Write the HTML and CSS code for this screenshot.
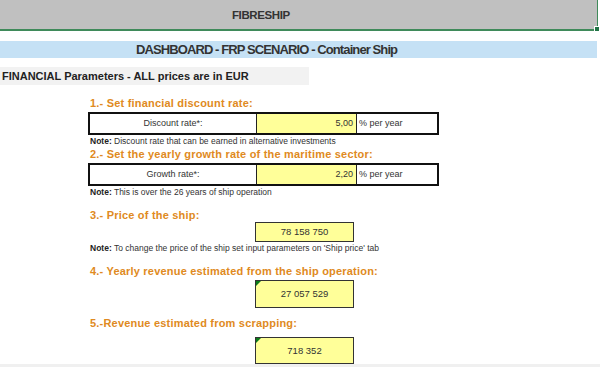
FILE: index.html
```html
<!DOCTYPE html>
<html>
<head>
  <title>FIBRESHIP - Dashboard</title>
  <link rel="stylesheet" href="styles.css">
</head>
<body>
  <div id="sheet">
    <div class="title-bar"><span>FIBRESHIP</span></div>
    <div class="dash-bar"><span>DASHBOARD - FRP SCENARIO - Container Ship</span></div>
    <div class="section-bar">FINANCIAL Parameters - ALL prices are in EUR</div>

    <div class="block">
      <h3 class="step">1.- Set financial discount rate:</h3>
      <div class="input-row">
        <div class="cell-label">Discount rate*:</div>
        <div class="cell-value">5,00</div>
        <div class="cell-unit">% per year</div>
      </div>
      <p class="note"><b>Note:</b> Discount rate that can be earned in alternative investments</p>

      <h3 class="step step-tight">2.- Set the yearly growth rate of the maritime sector:</h3>
      <div class="input-row">
        <div class="cell-label">Growth rate*:</div>
        <div class="cell-value">2,20</div>
        <div class="cell-unit">% per year</div>
      </div>
      <p class="note"><b>Note:</b> This is over the 26 years of ship operation</p>

      <h3 class="step step-3">3.- Price of the ship:</h3>
      <div class="out-box out-small">78 158 750</div>
      <p class="note"><b>Note:</b> To change the price of the ship set input parameters on 'Ship price' tab</p>

      <h3 class="step step-4">4.- Yearly revenue estimated from the ship operation:</h3>
      <div class="out-box flagged">27 057 529</div>

      <h3 class="step step-5">5.-Revenue estimated from scrapping:</h3>
      <div class="out-box out-last flagged">718 352</div>
    </div>
    <div class="bottom-strip"></div>
  </div>
</body>
</html>
```

FILE: styles.css
```css
body {
  margin: 0;
  background: #fff;
  font-family: "Liberation Sans", Arial, sans-serif;
  color: #333;
  overflow: hidden;
}
#sheet {
  width: 600px;
  height: 367px;
  overflow: hidden;
}

/* header bars */
.title-bar {
  width: 597px;
  height: 29px;
  background: #c0c0c0;
  border-bottom: 2px solid #3f8a5a;
  border-right: 1px solid #3f8a5a;
  position: relative;
  display: flex;
  align-items: center;
  font-size: 11.5px;
  letter-spacing: -0.4px;
  font-weight: bold;
  color: #333;
}
.title-bar span {
  margin-left: 232px;
}
.title-bar::after {
  content: "";
  position: absolute;
  right: -3px;
  bottom: -3px;
  width: 4px;
  height: 4px;
  background: #217346;
  border: 1px solid #fff;
}
.dash-bar {
  width: 597px;
  height: 17px;
  margin-top: 10px;
  background: #c5e1f5;
  display: flex;
  align-items: center;
  font-size: 13px;
  letter-spacing: -0.9px;
  font-weight: bold;
  color: #333;
}
.dash-bar span {
  margin-left: 136px;
}
.section-bar {
  width: 307px;
  height: 18px;
  margin-top: 9px;
  padding-left: 2px;
  background: #f2f2f2;
  font-size: 11px;
  font-weight: bold;
  line-height: 18px;
  color: #222;
}

/* content */
.block {
  padding-left: 88px;
}
.step {
  margin: 11px 0 2px 2px;
  font-size: 11px;
  line-height: 14px;
  font-weight: bold;
  color: #e08a22;
  letter-spacing: 0.2px;
}
.step-tight {
  margin-top: 1px;
}
.step-3 {
  margin-top: 11px;
  margin-bottom: 0;
}
.step-4 {
  margin-top: 11px;
  margin-bottom: 2px;
}
.step-5 {
  margin-top: 8px;
  margin-bottom: 7px;
}
.input-row {
  display: flex;
  width: 347px;
  height: 19px;
  border: 2px solid #111;
  font-size: 9px;
  line-height: 19px;
}
.cell-label {
  width: 166px;
  text-align: center;
  border-right: 1px solid #222;
}
.cell-value {
  width: 96px;
  padding-right: 3px;
  text-align: right;
  background: #ffff99;
  border-right: 1px solid #222;
}
.cell-unit {
  flex: 1;
  padding-left: 2px;
}
.note {
  margin: 1px 0 0 2px;
  font-size: 8.5px;
  line-height: 10px;
  color: #333;
}
.note b {
  color: #222;
}
.out-box {
  position: relative;
  margin-left: 167px;
  width: 97px;
  height: 26px;
  border: 1px solid #333;
  background: #ffff99;
  font-size: 9.5px;
  line-height: 26px;
  text-align: center;
  color: #333;
}
.out-small {
  height: 18px;
  line-height: 18px;
}
.out-last {
  height: 25px;
  line-height: 25px;
}
.flagged::before {
  content: "";
  position: absolute;
  left: 0;
  top: 0;
  border-top: 5px solid #0a7a1a;
  border-right: 5px solid transparent;
}
.bottom-strip {
  height: 10px;
  background: #f0f0f0;
}
```
